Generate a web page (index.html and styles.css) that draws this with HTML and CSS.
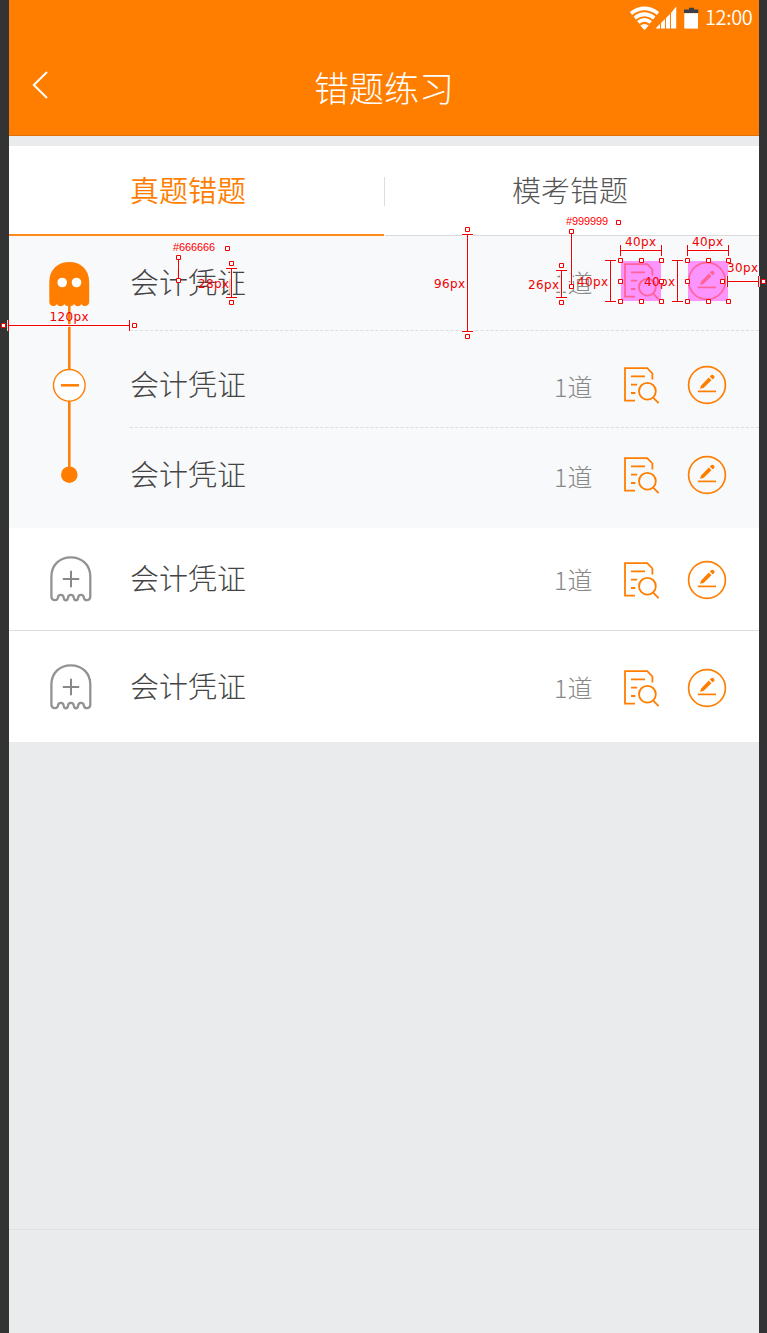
FILE: index.html
```html
<!DOCTYPE html>
<html lang="zh-CN">
<head>
<meta charset="utf-8">
<title>错题练习</title>
<link rel="stylesheet" href="styles.css">
</head>
<body>
<svg class="defs" aria-hidden="true">
  <defs>
    <symbol id="doc" viewBox="0 0 40 40">
      <g fill="none" stroke="#ff7e00" stroke-width="1.8">
        <path d="M14 35.7H4V3.2H26.3L31.4 8.5V14.5M10 11.4H24M10 19.6H16.2M10 28H14.4"/>
        <circle cx="26.4" cy="26.2" r="8.4"/>
        <path d="M32 32.4L37.6 38.1"/>
      </g>
    </symbol>
    <symbol id="edit" viewBox="0 0 40 40">
      <circle cx="20" cy="20" r="18.4" fill="none" stroke="#ff7e00" stroke-width="1.7"/>
      <path d="M10.8 26.4H29" stroke="#ff7e00" stroke-width="1.7"/>
      <path d="M13 23.8L14.1 20.4L21.8 12.6L24.5 15.3L16.5 23ZM22.8 11.6L23.8 10.6A2.1 2.1 0 0 1 26.9 13.6L25.5 14.3Z" fill="#ff7e00"/>
    </symbol>
    <symbol id="ghost" viewBox="0 0 42 46">
      <path d="M1.4 20.5C1.4 9 9.5 1.3 20.8 1.3S40.3 9 40.3 20.5V40.5C40.3 45 34.5 45 34 42C33.5 37.8 28.5 37.8 28 42C27.5 45 24.4 45 23.9 42C23.4 37.8 18.4 37.8 17.9 42C17.4 45 14.3 45 13.8 42C13.3 37.8 8.3 37.8 7.8 42C7.2 45 1.4 45 1.4 40.5Z" fill="none" stroke="#929292" stroke-width="2.3"/>
      <path d="M12.8 23H29.2M21 14.8V31.2" stroke="#888" stroke-width="2"/>
    </symbol>
  </defs>
</svg>
<main class="phone">
  <header class="header">
    <div class="status">
      <svg class="signals" viewBox="0 0 70 24">
        <g fill="none" stroke="#fff" stroke-width="3.7">
          <path d="M2 7.5Q15.5-2.6 29 7.5"/>
          <path d="M5.7 12Q15.5 4.5 25.3 12"/>
          <path d="M9.2 16.4Q15.5 11.4 21.8 16.4"/>
        </g>
        <path d="M11.3 19.4Q15.5 16.4 19.7 19.4L15.5 23.9Z" fill="#fff"/>
        <path d="M27 22.5V22L31 18V22.5ZM32 22.5V17L36 13V22.5ZM37 22.5V12L41 8V22.5ZM42 22.5V7L47.2 .5V22.5Z" fill="#fff"/>
        <path d="M55 7V3.5H60V1.8H65V3.5H69.3V7Z" fill="#3c4046"/>
        <path d="M55.3 7.2H69V22.6H55.3Z" fill="#fff"/>
      </svg>
      <span class="clock">12:00</span>
    </div>
    <div class="titlebar">
      <svg class="back" viewBox="0 0 16 28"><path d="M15 1L1.8 14L15 27" fill="none" stroke="#fff" stroke-width="2"/></svg>
      <h1 class="title">错题练习</h1>
    </div>
  </header>
  <nav class="tabs">
    <div class="tab tab-active">真题错题</div>
    <i class="tab-rule"></i>
    <div class="tab">模考错题</div>
  </nav>
  <section class="group">
    <svg class="rail" viewBox="0 0 121 292">
      <path d="M60.3 65V134M60.3 165V238" stroke="#ff7e00" stroke-width="2.5"/>
      <path d="M40.3 46C40.3 33.5 49 26 60.3 26S80.2 33.5 80.2 46V66C80.2 71 73.5 71 72.3 68C71.2 71 66.5 71 65.2 68C63.5 71 56.8 71 55.3 68C54 71 49.3 71 48 68C46.8 71 40.3 71 40.3 66Z" fill="#ff7e00"/>
      <circle cx="53.2" cy="46.5" r="4.8" fill="#fff"/>
      <circle cx="67.5" cy="46.5" r="4.8" fill="#fff"/>
      <circle cx="60.3" cy="149.3" r="15.8" fill="#fff" stroke="#ff7e00" stroke-width="1.4"/>
      <path d="M52 149.3H70" stroke="#ff7e00" stroke-width="2.5"/>
      <circle cx="60.3" cy="238.7" r="8.3" fill="#ff7e00"/>
    </svg>
    <div class="rows">
      <div class="row row-first"><span class="name">会计凭证</span><span class="count">1道</span><svg class="doc"><use href="#doc"/></svg><svg class="edit"><use href="#edit"/></svg></div>
      <div class="row row-second"><span class="name">会计凭证</span><span class="count">1道</span><svg class="doc"><use href="#doc"/></svg><svg class="edit"><use href="#edit"/></svg></div>
      <div class="row row-third"><span class="name">会计凭证</span><span class="count">1道</span><svg class="doc"><use href="#doc"/></svg><svg class="edit"><use href="#edit"/></svg></div>
    </div>
  </section>
  <section class="closed closed-ruled">
    <div class="marker"><svg class="ghost"><use href="#ghost"/></svg></div>
    <div class="row"><span class="name">会计凭证</span><span class="count">1道</span><svg class="doc"><use href="#doc"/></svg><svg class="edit"><use href="#edit"/></svg></div>
  </section>
  <section class="closed closed-last">
    <div class="marker"><svg class="ghost"><use href="#ghost"/></svg></div>
    <div class="row"><span class="name">会计凭证</span><span class="count">1道</span><svg class="doc"><use href="#doc"/></svg><svg class="edit"><use href="#edit"/></svg></div>
  </section>
  <div class="empty"></div>
</main>
<svg class="notes" viewBox="0 0 767 1333">
  <defs>
    <path id="h" d="M-2-2H2V2H-2Z"/>
    <path id="m" d="M8.5 325.5H129.5M8.5 320V331M129.5 320V331M178.5 258V280M231.5 268.5V297.5M226 268.5H237M226 297.5H237M467.5 234.5V331.5M462 234.5H473M462 331.5H473M571.5 232V286M561.5 270.5V297.5M556 270.5H567M556 297.5H567M620.5 250.5H661.5M620.5 245V256M661.5 245V256M687.5 250.5H728.5M687.5 245V256M728.5 245V256M610.5 260.5V301.5M605 260.5H616M605 301.5H616M677.5 260.5V301.5M672 260.5H683M672 301.5H683M727.5 281.5H758.5M727.5 276V287M758.5 276V287"/>
  </defs>
  <path class="area" d="M621 261H661V301H621ZM688 261H728V301H688Z"/>
  <use class="halo" href="#m"/>
  <use class="ink" href="#m"/>
  <g class="label">
    <text x="49.5" y="321" textLength="39">120px</text>
    <text x="198" y="288" textLength="31">28px</text>
    <text x="434" y="288" textLength="31">96px</text>
    <text x="528" y="289" textLength="31">26px</text>
    <text x="577" y="286" textLength="31">40px</text>
    <text x="644" y="286" textLength="31">40px</text>
    <text x="625" y="246" textLength="31">40px</text>
    <text x="692" y="246" textLength="31">40px</text>
    <text x="727" y="272" textLength="31">30px</text>
  </g>
  <g class="hex">
    <text x="173" y="251" textLength="42">#666666</text>
    <text x="566" y="225" textLength="42">#999999</text>
  </g>
  <g class="handles">
    <use href="#h" x="3.5" y="325.5"/><use href="#h" x="134.5" y="325.5"/>
    <use href="#h" x="227.5" y="248.5"/><use href="#h" x="178.5" y="257.5"/><use href="#h" x="178.5" y="280.5"/>
    <use href="#h" x="231.5" y="263.5"/><use href="#h" x="231.5" y="302.5"/>
    <use href="#h" x="467.5" y="229.5"/><use href="#h" x="467.5" y="336.5"/>
    <use href="#h" x="618.5" y="222.5"/><use href="#h" x="571.5" y="231.5"/><use href="#h" x="571.5" y="286.5"/>
    <use href="#h" x="561.5" y="265.5"/><use href="#h" x="561.5" y="302.5"/>
    <use href="#h" x="620.5" y="260.5"/><use href="#h" x="641.5" y="260.5"/><use href="#h" x="661.5" y="260.5"/>
    <use href="#h" x="620.5" y="281.5"/><use href="#h" x="661.5" y="281.5"/>
    <use href="#h" x="620.5" y="301.5"/><use href="#h" x="641.5" y="301.5"/><use href="#h" x="661.5" y="301.5"/>
    <use href="#h" x="687.5" y="260.5"/><use href="#h" x="708.5" y="260.5"/><use href="#h" x="728.5" y="260.5"/>
    <use href="#h" x="687.5" y="281.5"/><use href="#h" x="722.5" y="281.5"/>
    <use href="#h" x="687.5" y="301.5"/><use href="#h" x="708.5" y="301.5"/><use href="#h" x="728.5" y="301.5"/>
    <use href="#h" x="763.5" y="281.5"/>
  </g>
</svg>
</body>
</html>
```
FILE: styles.css
```css
* { box-sizing: border-box; }
body {
  margin: 0;
  position: relative;
  height: 1333px;
  overflow: hidden;
  background: #333;
  font-family: "Noto Sans CJK SC", sans-serif;
  font-weight: 300;
}
svg { display: block; }
.defs { position: absolute; width: 0; height: 0; }
.phone {
  width: 750px;
  height: 1333px;
  margin-left: 9px;
  background: #eaebed;
  display: flex;
  flex-direction: column;
}
.header {
  height: 136px;
  background: #ff7e00;
  border-bottom: 1px solid #e07008;
  color: #fff;
}
.status {
  height: 36px;
  padding-right: 5px;
  display: flex;
  justify-content: flex-end;
  align-items: center;
  gap: 6px;
}
.signals { width: 70px; height: 24px; }
.clock { font-size: 20px; line-height: 34px; height: 36px; width: 49px; font-weight: 350; letter-spacing: -.4px; }
.titlebar {
  height: 99px;
  padding: 0 23px;
  display: grid;
  grid-template-columns: 16px 1fr 16px;
  align-items: start;
}
.back { width: 16px; height: 28px; margin-top: 35px; }
.title {
  margin: 25px 0 0;
  text-align: center;
  font-size: 35px;
  font-weight: 300;
  line-height: 52px;
}
.tabs {
  margin-top: 10px;
  height: 90px;
  background: #fff;
  display: grid;
  grid-template-columns: 375px 1px 374px;
  align-items: center;
}
.tab {
  height: 90px;
  padding-right: 17px;
  border-bottom: 1px solid #d9dadb;
  color: #555;
  font-size: 29px;
  line-height: 87px;
  text-align: center;
}
.tab:last-child { padding-right: 4px; }
.tab-active { color: #ff7e00; border-bottom: 2px solid #ff8a1a; font-weight: 350; }
.tab-rule { height: 29px; background: #ddd; }
.group {
  height: 292px;
  background: #f8f9fb;
  display: grid;
  grid-template-columns: 121px 629px;
}
.rail { width: 121px; height: 292px; }
.row {
  flex: 1;
  display: flex;
  align-items: center;
  padding-right: 32px;
}
.row-first { height: 95px; padding-bottom: 4px; border-bottom: 1px dashed #dcdddf; }
.row-second { height: 97px; padding-top: 12px; border-bottom: 1px dashed #dcdddf; }
.row-third { height: 100px; padding-bottom: 6px; }
.name { flex: 1; color: #444; font-size: 29px; line-height: 40px; padding-bottom: 4px; }
.row-first .name { padding-bottom: 0; }
.count { width: 68px; color: #888; font-size: 25px; line-height: 40px; padding: 2px 0 0 1px; }
.closed .name { padding-bottom: 6px; }
.closed .count { padding: 0 0 2px 1px; }
.doc { width: 40px; height: 40px; margin-right: 26px; }
.edit { width: 40px; height: 40px; }
.closed {
  background: #fff;
  display: flex;
  align-items: center;
}
.closed-ruled { height: 103px; padding-top: 1px; border-bottom: 1px solid #ddd; }
.closed-last { height: 111px; padding-top: 2px; }
.marker { width: 121px; padding: 0 0 2px 41px; }
.ghost { width: 42px; height: 46px; }
.empty { height: 488px; border-bottom: 1px solid #dfe0e2; }
.notes { position: absolute; left: 0; top: 0; width: 767px; height: 1333px; }
.area { fill: #ff50ff; fill-opacity: .6; }
.halo { fill: none; stroke: #fff; stroke-width: 3; stroke-opacity: .8; }
.ink { fill: none; stroke: #f00000; stroke-width: 1; }
.label { font: 12px "DejaVu Sans", sans-serif; fill: #f00000; }
.hex { font: 11px "Liberation Sans", sans-serif; fill: #f00; }
.handles { fill: #fff; stroke: #f00000; stroke-width: 1; }
```
